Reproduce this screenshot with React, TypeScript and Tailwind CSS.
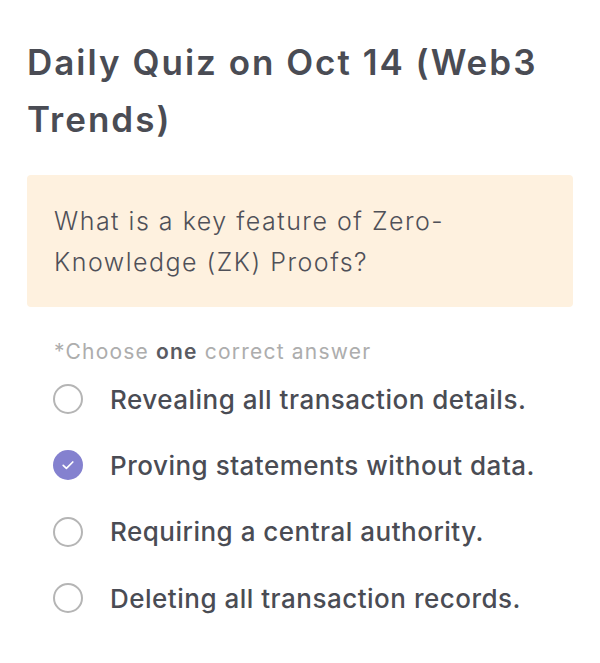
import React from "react";

const options = [
  { text: "Revealing all transaction details.", checked: false },
  { text: "Proving statements without data.", checked: true },
  { text: "Requiring a central authority.", checked: false },
  { text: "Deleting all transaction records.", checked: false },
];

export default function App() {
  return (
    <div
      className="w-[600px] h-[663px] bg-white px-[27px] pt-[34px]"
      style={{ fontFamily: "Inter, 'Noto Sans', sans-serif" }}
    >
      <h1 className="text-[35px] leading-[57px] font-semibold text-[#4a4c54] tracking-[2px]">
        Daily Quiz on Oct 14 (Web3 Trends)
      </h1>
      <div className="mt-[27px] bg-[#fef1df] rounded-[4px] px-[27px] pt-[26px] pb-[24px]">
        <p className="text-[25px] leading-[41px] font-light text-[#4f5058] tracking-[1.5px]">
          What is a key feature of Zero-Knowledge (ZK) Proofs?
        </p>
      </div>
      <p className="mt-[31px] ml-[27px] text-[21px] leading-[28px] text-[#adadad] tracking-[1.2px]">
        *Choose <span className="font-semibold text-[#5a5b62]">one</span> correct answer
      </p>
      <div className="flex flex-col">
        {options.map((o) => (
          <div key={o.text} className="flex items-center h-[66.3px] pl-[26px]">
            {o.checked ? (
              <div className="w-[30px] h-[30px] rounded-full bg-[#8481cf] flex items-center justify-center shrink-0">
                <svg width="16" height="16" viewBox="0 0 16 16" fill="none">
                  <path d="M3.2 8.4l3.2 3L12.8 5" stroke="white" strokeWidth="1.7" strokeLinecap="round" strokeLinejoin="round" />
                </svg>
              </div>
            ) : (
              <div className="w-[30px] h-[30px] rounded-full border-[2px] border-[#b5b5b5] shrink-0" />
            )}
            <span className="ml-[27px] text-[26px] font-medium text-[#4a4c54] tracking-[0.5px]">{o.text}</span>
          </div>
        ))}
      </div>
    </div>
  );
}
